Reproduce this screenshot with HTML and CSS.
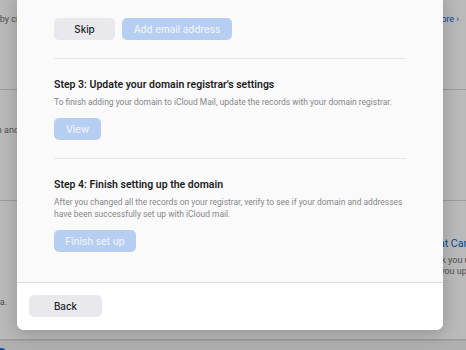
FILE: index.html
```html
<!DOCTYPE html>
<html>
<head>
<meta charset="utf-8">
<link rel="stylesheet" href="styles.css">
</head>
<body>
<div class="page">
  <div class="bg-row r1">
    <div class="bg-left"><span class="frag">Set up your domain quickly by cr</span></div>
    <div class="bg-right end"><span class="link">Learn more ›</span></div>
  </div>
  <div class="bg-row r2">
    <div class="bg-left"><span class="frag">Add your domain and</span></div>
    <div class="bg-right"></div>
  </div>
  <div class="bg-row r3">
    <div class="bg-left"><span class="frag">your personal data.</span></div>
    <div class="bg-right">
      <span class="link big">What Can I do</span>
      <span class="muted m1">Check you using</span>
      <span class="muted m2">Set you up with</span>
    </div>
  </div>
  <div class="bg-foot"><span class="dot"></span></div>

  <div class="overlay"></div>

  <div class="modal">
    <div class="modal-body">
      <div class="btn-row">
        <button class="btn btn-gray">Skip</button>
        <button class="btn btn-blue">Add email address</button>
      </div>
      <hr class="divider">
      <section class="step">
        <h2 class="step-title">Step 3: Update your domain registrar's settings</h2>
        <p class="step-desc">To finish adding your domain to iCloud Mail, update the records with your domain registrar.</p>
        <button class="btn btn-blue btn-view">View</button>
      </section>
      <hr class="divider">
      <section class="step">
        <h2 class="step-title">Step 4: Finish setting up the domain</h2>
        <p class="step-desc">After you changed all the records on your registrar, verify to see if your domain and addresses have been successfully set up with iCloud mail.</p>
        <button class="btn btn-blue btn-finish">Finish set up</button>
      </section>
    </div>
    <div class="modal-foot">
      <button class="btn btn-gray btn-back">Back</button>
    </div>
  </div>
</div>
</body>
</html>
```
FILE: styles.css
```css
* { box-sizing: border-box; }
html, body { margin: 0; padding: 0; }
body {
  width: 466px;
  height: 350px;
  overflow: hidden;
  font-family: Roboto, "Liberation Sans", sans-serif;
  background: #ffffff;
}
.page {
  position: relative;
  width: 466px;
  height: 350px;
  overflow: hidden;
  display: flex;
  flex-direction: column;
}
.bg-row {
  display: flex;
  justify-content: space-between;
  border-bottom: 1px solid #d6d6d6;
  flex: none;
}
.r1 { height: 90px; }
.r2 { height: 111px; }
.r3 { height: 139px; }
.bg-left {
  width: 19px;
  overflow: hidden;
  white-space: nowrap;
  font-size: 9px;
  line-height: 11px;
  color: #6e6e73;
  display: flex;
  justify-content: flex-end;
  align-items: flex-start;
}
.frag { flex: none; display: block; }
.r1 .frag { margin-top: 14px; }
.r2 .frag { margin-top: 35px; }
.r3 .frag { margin-top: 96px; margin-right: 12px; }
.bg-right {
  width: 30px;
  overflow: hidden;
  white-space: nowrap;
  font-size: 9px;
  display: flex;
  flex-direction: column;
}
.bg-right.end { align-items: flex-end; padding-right: 7px; }
.r1 .bg-right .link { margin-top: 14px; line-height: 11px; }
.r3 .bg-right { padding-top: 36px; }
.r3 .bg-right .big { margin-left: -12px; font-size: 10.5px; line-height: 14px; }
.r3 .bg-right .m1 { margin-left: -15px; margin-top: 4px; line-height: 11px; }
.r3 .bg-right .m2 { margin-left: -11px; line-height: 11px; }
.link { color: #0066cc; display: block; }
.muted { color: #6e6e73; display: block; }
.bg-foot {
  flex: 1;
  background: #f2f2f2;
  border-top: 1px solid #e0e0e0;
  position: relative;
}
.dot {
  position: absolute;
  left: -3px;
  bottom: -7px;
  width: 9px;
  height: 9px;
  border-radius: 50%;
  background: #0a6fd6;
}
.overlay {
  position: absolute;
  inset: 0;
  background: rgba(0, 0, 0, 0.27);
}
.modal {
  position: absolute;
  left: 17px;
  top: -10px;
  width: 426px;
  height: 340px;
  background: #ffffff;
  border-radius: 7px;
  box-shadow: 0 4px 18px rgba(0, 0, 0, 0.22);
  display: flex;
  flex-direction: column;
  overflow: hidden;
}
.modal-body {
  height: 293px;
  background: #fafafa;
  padding: 28px 37px 0 37px;
  border-bottom: 1px solid #dcdcdc;
}
.btn-row { display: flex; gap: 7px; }
.btn {
  font-family: Inter, "Liberation Sans", sans-serif;
  border: none;
  border-radius: 5px;
  height: 22px;
  font-size: 9.8px;
  font-weight: 500;
  padding: 0;
  display: flex;
  align-items: center;
  justify-content: center;
}
.btn-gray { background: #e8e8ed; color: #1d1d1f; width: 61px; }
.btn-blue { background: #b6cef2; color: #eef3fc; width: 110px; }
.btn-view { width: 47px; }
.btn-finish { width: 82px; }
.divider {
  border: none;
  height: 1px;
  background: #e8e8e8;
  margin: 18px 0 0 0;
}
.step { padding-top: 19px; }
.step-title {
  margin: 0;
  font-size: 10.5px;
  line-height: 14px;
  font-weight: 600;
  color: #1d1d1f;
}
.step-desc {
  margin: 4px 0 10px 0;
  font-size: 8.45px;
  line-height: 12px;
  color: #86868b;
}
.modal-foot {
  flex: 1;
  background: #ffffff;
  padding: 12px 12px;
}
.btn-back { width: 73px; }
```
